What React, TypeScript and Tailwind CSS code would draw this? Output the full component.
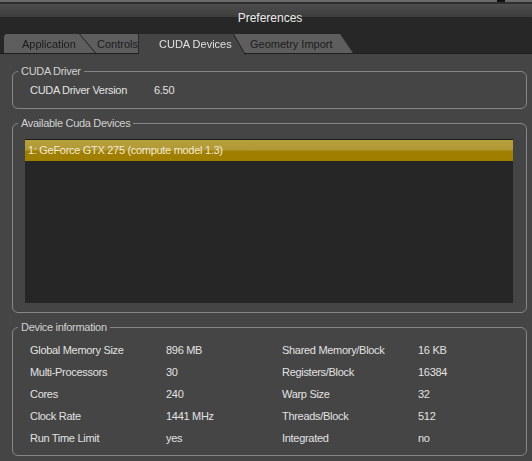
import React from "react";

const leftRows = [
  ["Global Memory Size", "896 MB"],
  ["Multi-Processors", "30"],
  ["Cores", "240"],
  ["Clock Rate", "1441 MHz"],
  ["Run Time Limit", "yes"],
];

const rightRows = [
  ["Shared Memory/Block", "16 KB"],
  ["Registers/Block", "16384"],
  ["Warp Size", "32"],
  ["Threads/Block", "512"],
  ["Integrated", "no"],
];

function Group({ title, className, children }: { title: string; className: string; children: React.ReactNode }) {
  return (
    <fieldset className={`border border-[#868686] rounded-[6px] ${className}`}>
      <legend className="ml-[5px] px-[3px] leading-[14px] text-[#d2d2d2]">{title}</legend>
      {children}
    </fieldset>
  );
}

export default function App() {
  return (
    <div className="w-[532px] h-[461px] overflow-hidden bg-[#454545] flex flex-col text-[11px] text-[#e2e2e2] font-['Liberation_Sans',Arial,sans-serif]">
      {/* window top edge */}
      <div className="h-[2px] bg-[#6a6a6a] flex justify-end">
        <div className="w-[8px] bg-[#111] mr-[27px]" />
      </div>
      <div className="h-[2px] bg-[#2e2e2e]" />

      {/* title */}
      <div className="h-[30px] flex justify-center pl-[8px] pt-[7px] bg-[linear-gradient(to_bottom,#4e4e4e_0px,#3d3d3d_13px,#272727_13px)]">
        <span className="text-[12px] leading-[14px] text-[#ececec]">Preferences</span>
      </div>

      {/* tabs */}
      <div className="h-[20px] flex pl-[4px] bg-[#272727] border-b border-[#1e1e1e]">
        <div className="relative z-20 drop-shadow-[1px_0_0_#1f1f1f]">
          <div className="h-full w-[91px] bg-[#5e5e5e] text-[#1c1c1c] leading-[20px] pl-[18px] [clip-path:polygon(0_2px,2px_0,75px_0,91px_100%,0_100%)]">
            Application
          </div>
        </div>
        <div className="relative z-10 -ml-[16px] h-full w-[60px] bg-[#5e5e5e] text-[#1c1c1c] leading-[20px] pl-[18px] border-r border-[#2a2a2a]">
          Controls
        </div>
        <div className="relative z-20 drop-shadow-[1px_0_0_#1f1f1f]">
          <div className="h-[21px] w-[106px] bg-[#454545] text-[#e0e0e0] leading-[20px] pl-[20px] [clip-path:polygon(0_0,94px_0,106px_100%,0_100%)]">
            CUDA Devices
          </div>
        </div>
        <div className="relative z-10 -ml-[12px]">
          <div className="h-full w-[120px] bg-[#5e5e5e] text-[#1c1c1c] leading-[20px] pl-[17px] [clip-path:polygon(0_0,107px_0,120px_100%,0_100%)]">
            Geometry Import
          </div>
        </div>
      </div>

      {/* content */}
      <div className="flex-1 pl-[12px] pr-[5px] pt-[10px] flex flex-col gap-[7px] tracking-[-0.3px]">
        <Group title="CUDA Driver" className="h-[45px]">
          <div className="flex pl-[17px] pt-[5px] leading-[14px]">
            <span className="w-[124px]">CUDA Driver Version</span>
            <span>6.50</span>
          </div>
        </Group>

        <Group title="Available Cuda Devices" className="h-[197px]">
          <div className="pl-[12px] pr-[13px] pt-[9px]">
            <div className="h-[164px] bg-[#262626] border-t border-[#1a1a1a]">
              <div className="h-[21px] pl-[3px] leading-[21px] text-[#f4ead0] bg-[linear-gradient(to_bottom,#b8a23c_0px,#b09836_10px,#a07f00_11px,#9f7e00_100%)]">
                1: GeForce GTX 275 (compute model 1.3)
              </div>
            </div>
          </div>
        </Group>

        <Group title="Device information" className="h-[136px]">
          <div className="pl-[17px] pt-[5px] grid grid-cols-[136px_116px_136px_1fr] leading-[22px]">
            {leftRows.map((l, i) => (
              <React.Fragment key={l[0]}>
                <span>{l[0]}</span>
                <span>{l[1]}</span>
                <span>{rightRows[i][0]}</span>
                <span>{rightRows[i][1]}</span>
              </React.Fragment>
            ))}
          </div>
        </Group>
      </div>
    </div>
  );
}
